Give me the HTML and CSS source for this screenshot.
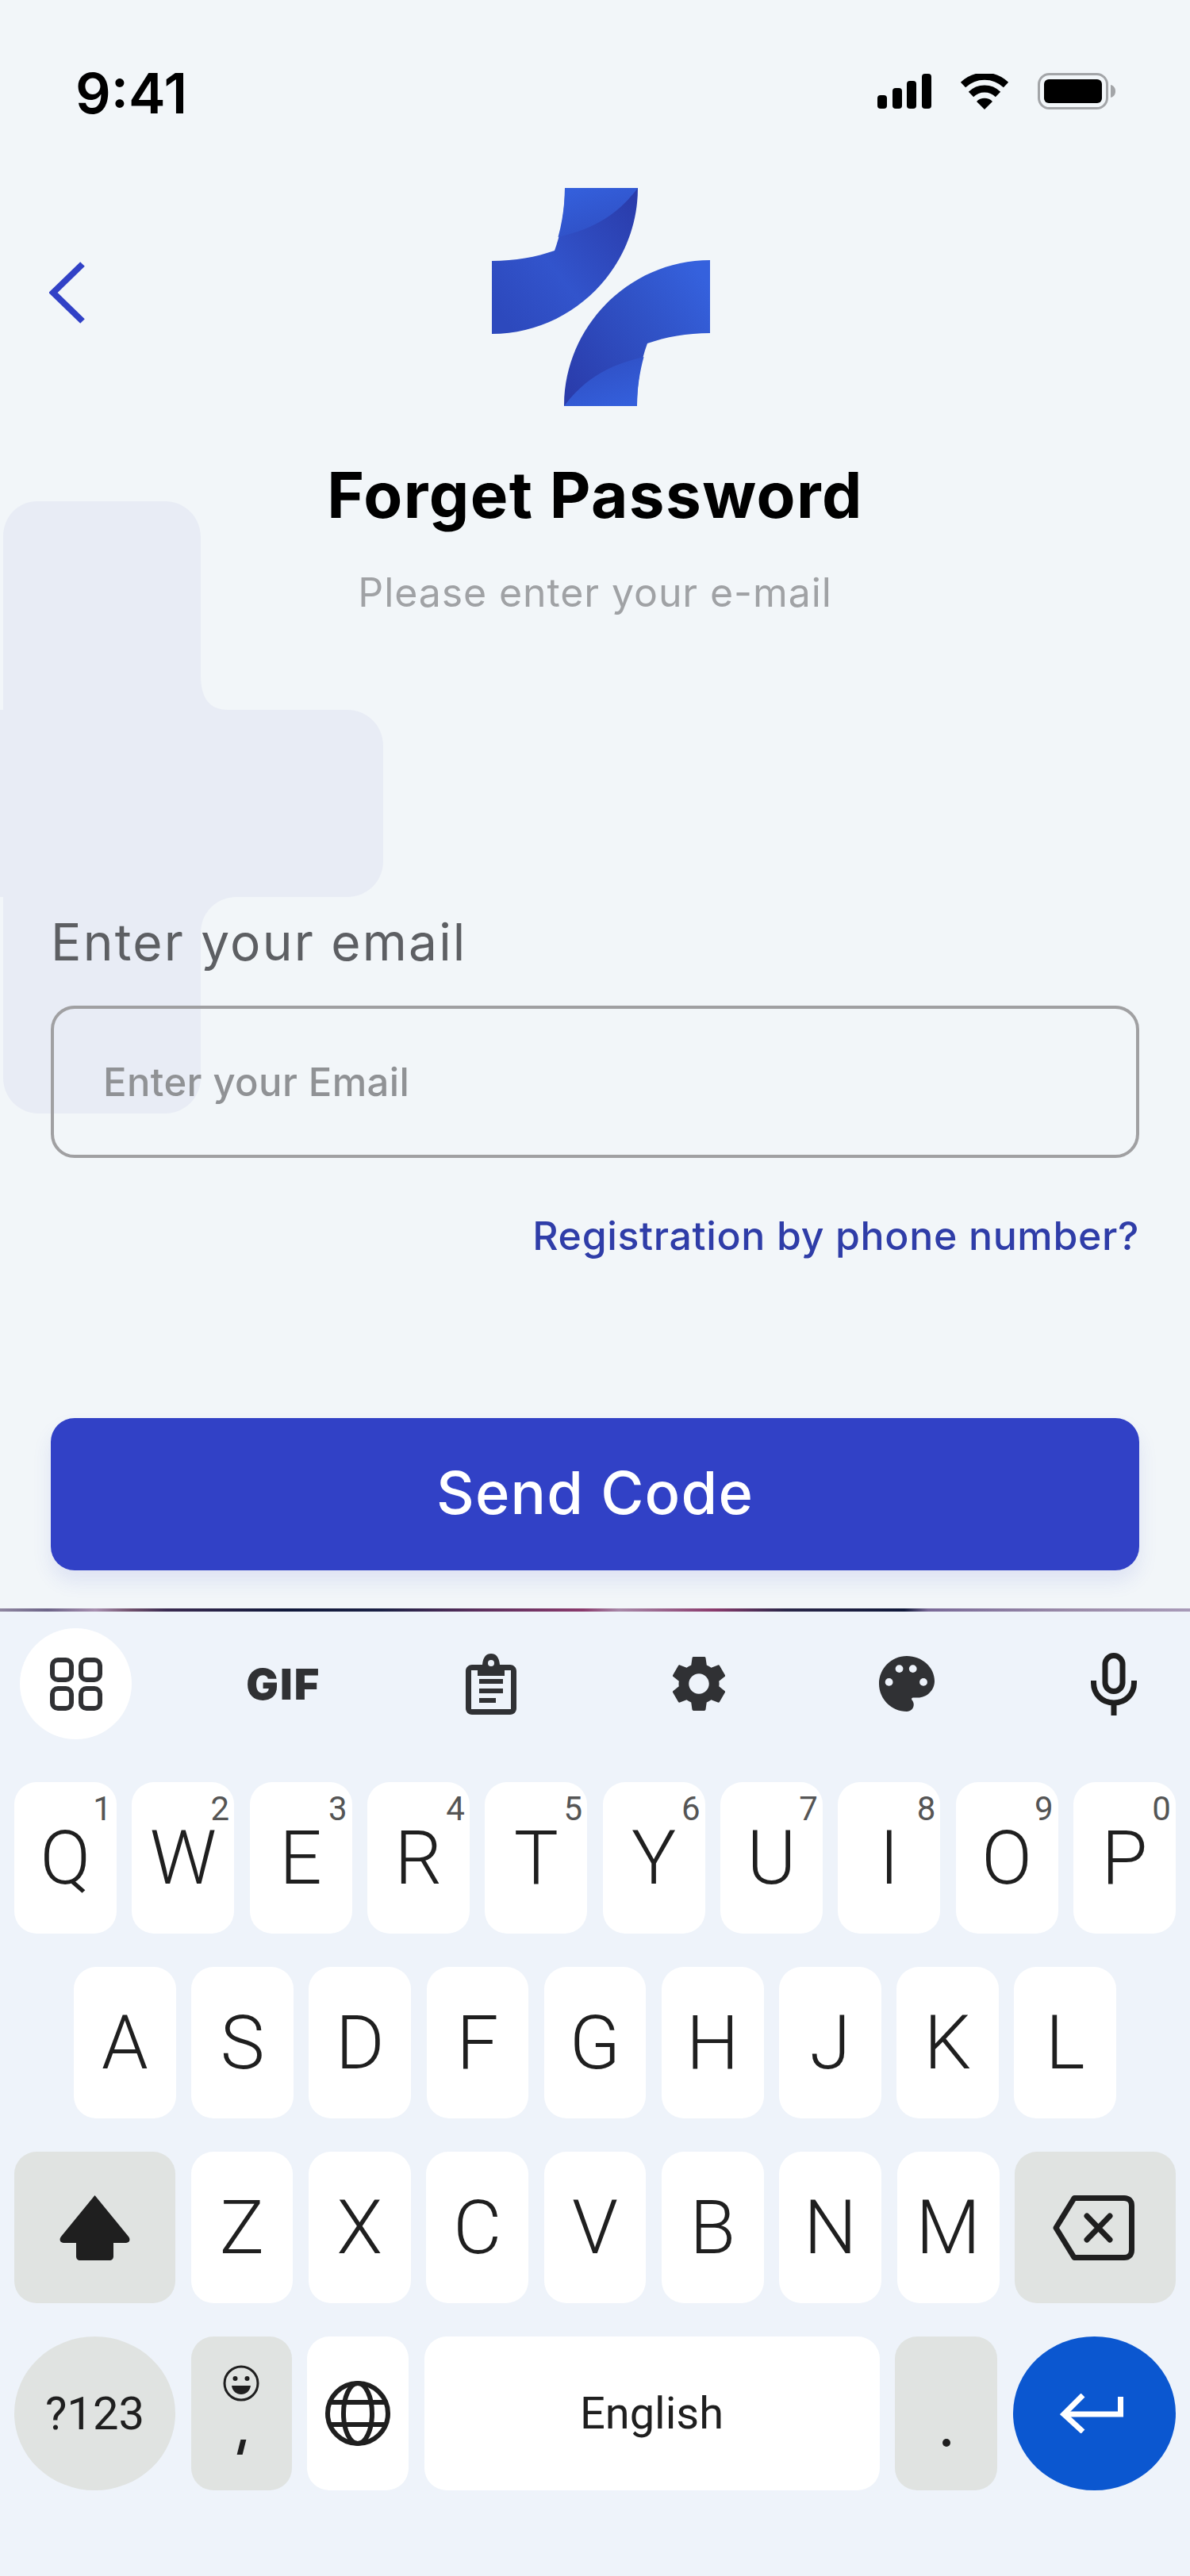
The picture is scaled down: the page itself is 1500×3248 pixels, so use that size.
FILE: index.html
```html
<!DOCTYPE html>
<html lang="en">

<head>
  <meta charset="UTF-8">
  <meta name="viewport" content="width=device-width, initial-scale=1.0">
  <title>Forget Password</title>

  <link rel="stylesheet" href="styles.css">
</head>

<body>
  <div class="phone">
    <svg class="bg-cross" viewBox="0 0 484 772" width="484" height="772">
      <path d="M4 45C4 20 22 0 47 0H208C233 0 253 20 253 45V220C253 245 262 263 287 263H438C463 263 483 283 483 308V454C483 479 463 499 438 499H298C273 499 253 519 253 544V727C253 752 233 772 208 772H49C24 772 4 752 4 727V499H0V263H4Z" />
    </svg>

    <div class="status-bar">
      <span class="time">9:41</span>
      <div class="status-icons">
        <svg width="68" height="44" viewBox="0 0 68 44">
          <rect x="0" y="27" width="12" height="17" rx="4" />
          <rect x="19" y="18" width="12" height="26" rx="4" />
          <rect x="37" y="9" width="12" height="35" rx="4" />
          <rect x="56" y="0" width="12" height="44" rx="4" />
        </svg>
        <svg width="62" height="45" viewBox="0 0 62 45">
          <path d="M4 14A39 39 0 0 1 58 14" fill="none" stroke="#000" stroke-width="9" />
          <path d="M14 26A24 24 0 0 1 48 26" fill="none" stroke="#000" stroke-width="9" />
          <path d="M31 45L21 35A14 14 0 0 1 41 35Z" />
        </svg>
        <svg width="98" height="46" viewBox="0 0 98 46">
          <rect x="1.5" y="1.5" width="86" height="43" rx="13" fill="none" stroke="#a3a5a8" stroke-width="3" />
          <rect x="8" y="8" width="73" height="30" rx="6" />
          <path d="M92 15C96 16 98 19 98 23S96 30 92 31Z" fill="#a3a5a8" />
        </svg>
      </div>
    </div>

    <div class="header">
      <button class="back-btn">
        <svg width="46" height="78" viewBox="0 0 46 78">
          <path d="M42 3L5 39L42 75" fill="none" stroke="#3141c6" stroke-width="8" />
        </svg>
      </button>
      <svg class="logo" width="275" height="275" viewBox="0 0 275 275">
        <defs>
          <linearGradient id="baseA" gradientUnits="userSpaceOnUse" x1="10" y1="160" x2="184" y2="20">
            <stop offset="0" stop-color="#2d49bd" />
            <stop offset="0.4" stop-color="#3254cc" />
            <stop offset="1" stop-color="#2a3cab" />
          </linearGradient>
          <linearGradient id="baseB" gradientUnits="userSpaceOnUse" x1="275" y1="125" x2="92" y2="255">
            <stop offset="0" stop-color="#3561dd" />
            <stop offset="0.4" stop-color="#3052c6" />
            <stop offset="1" stop-color="#2a3cab" />
          </linearGradient>
          <linearGradient id="topLight" gradientUnits="userSpaceOnUse" x1="110" y1="0" x2="130" y2="65">
            <stop offset="0" stop-color="#345fdb" />
            <stop offset="1" stop-color="#2f4fc4" />
          </linearGradient>
          <linearGradient id="bottomLight" gradientUnits="userSpaceOnUse" x1="165" y1="275" x2="145" y2="210">
            <stop offset="0" stop-color="#345fdb" />
            <stop offset="1" stop-color="#2f4fc4" />
          </linearGradient>
        </defs>
        <path d="M92 0H184C184 101 101 184 0 184V92C29 92 56 87 79 79C88 55 92 27 92 0Z" fill="url(#baseA)" />
        <path d="M92 0H184C155 38 125 52 83.500 62C89 42 92 20 92 0Z" fill="url(#topLight)" />
        <path d="M183 275H91C91 174 174 91 275 91V183C246 183 219 188 196 196C187 220 183 248 183 275Z" fill="url(#baseB)" />
        <path d="M183 275H91C120 237 150 223 191.500 213C186 233 183 255 183 275Z" fill="url(#bottomLight)" />
      </svg>
      <div></div>
    </div>

    <div class="intro">
      <h1>Forget Password</h1>
      <p>Please enter your e-mail</p>
    </div>

    <form class="form">
      <label for="email">Enter your email</label>
      <input id="email" type="text" placeholder="Enter your Email">
      <a class="phone-link" href="#">Registration by phone number?</a>
      <button class="send-btn" type="button">Send Code</button>
    </form>

    <div class="keyboard">
      <div class="keyboard-line"></div>
      <div class="toolbar">
        <div class="tool tool-active">
          <svg width="66" height="67" viewBox="0 0 66 67" fill="none" stroke="#303134" stroke-width="6">
            <rect x="3" y="3" width="24" height="25" rx="7" />
            <rect x="39" y="3" width="24" height="25" rx="7" />
            <rect x="3" y="39" width="24" height="25" rx="7" />
            <rect x="39" y="39" width="24" height="25" rx="7" />
          </svg>
        </div>
        <div class="tool"><span class="gif">GIF</span></div>
        <div class="tool">
          <svg width="64" height="77" viewBox="0 0 64 77">
            <path d="M8 14H21C22 4 26 0 32 0S42 4 43 14H56C60 14 64 17 64 22V69C64 74 60 77 56 77H8C4 77 0 74 0 69V22C0 17 4 14 8 14ZM7 21V70H57V21H49V28H15V21Z" fill="#303134" fill-rule="evenodd" />
            <circle cx="32" cy="12" r="4" fill="#edf2fa" />
            <rect x="17" y="32" width="30" height="6" fill="#303134" />
            <rect x="17" y="44" width="30" height="6" fill="#303134" />
            <rect x="17" y="56" width="21" height="6" fill="#303134" />
          </svg>
        </div>
        <div class="tool">
          <svg width="68" height="70" viewBox="2.4 2.2 19.2 19.6">
            <path d="M19.14 12.94c.04-.3.06-.61.06-.94 0-.32-.02-.64-.07-.94l2.03-1.58c.18-.14.23-.41.12-.61l-1.92-3.32c-.12-.22-.37-.29-.59-.22l-2.39.96c-.5-.38-1.03-.7-1.62-.94L14.4 2.81c-.04-.24-.24-.41-.48-.41h-3.84c-.24 0-.43.17-.47.41L9.25 5.35c-.59.24-1.13.57-1.62.94l-2.39-.96c-.22-.08-.47 0-.59.22L2.74 8.87c-.12.21-.08.47.12.61l2.03 1.58c-.05.3-.09.63-.09.94s.02.64.07.94l-2.03 1.58c-.18.14-.23.41-.12.61l1.92 3.32c.12.22.37.29.59.22l2.39-.96c.5.38 1.03.7 1.62.94l.36 2.54c.05.24.24.41.48.41h3.84c.24 0 .44-.17.47-.41l.36-2.54c.59-.24 1.13-.56 1.62-.94l2.39.96c.22.08.47 0 .59-.22l1.92-3.32c.12-.22.07-.47-.12-.61l-2.01-1.58zM12 15.6c-1.98 0-3.6-1.62-3.6-3.6s1.62-3.6 3.6-3.6 3.6 1.62 3.6 3.6-1.62 3.6-3.6 3.6z" fill="#303134" />
          </svg>
        </div>
        <div class="tool">
          <svg width="70" height="70" viewBox="2 2 20 20">
            <path d="M12 2C6.49 2 2 6.49 2 12s4.49 10 10 10c1.38 0 2.5-1.12 2.5-2.5 0-.61-.23-1.2-.64-1.67-.08-.1-.13-.21-.13-.33 0-.28.22-.5.5-.5H16c3.31 0 6-2.69 6-6 0-4.96-4.49-9-10-9z" fill="#303134" />
            <circle cx="5.6" cy="11.4" r="1.4" fill="#edf2fa" />
            <circle cx="9.3" cy="6.6" r="1.4" fill="#edf2fa" />
            <circle cx="14.2" cy="6.6" r="1.4" fill="#edf2fa" />
            <circle cx="18" cy="11.4" r="1.4" fill="#edf2fa" />
          </svg>
        </div>
        <div class="tool">
          <svg width="58" height="79" viewBox="0 0 58 79" fill="none" stroke="#1f1f1f" stroke-width="7">
            <rect x="18" y="3.5" width="22" height="45" rx="11" />
            <path d="M3.5 35V38C3.5 52 14 63 29 63S54.500 52 54.500 38V35" />
            <path d="M29 63V79" />
          </svg>
        </div>
      </div>

      <div class="key-row row-one">
        <div class="key">Q<sup>1</sup></div>
        <div class="key">W<sup>2</sup></div>
        <div class="key">E<sup>3</sup></div>
        <div class="key">R<sup>4</sup></div>
        <div class="key">T<sup>5</sup></div>
        <div class="key">Y<sup>6</sup></div>
        <div class="key">U<sup>7</sup></div>
        <div class="key">I<sup>8</sup></div>
        <div class="key">O<sup>9</sup></div>
        <div class="key">P<sup>0</sup></div>
      </div>
      <div class="key-row row-two">
        <div class="key">A</div>
        <div class="key">S</div>
        <div class="key">D</div>
        <div class="key">F</div>
        <div class="key">G</div>
        <div class="key">H</div>
        <div class="key">J</div>
        <div class="key">K</div>
        <div class="key">L</div>
      </div>
      <div class="key-row row-three">
        <div class="key key-grey key-wide">
          <svg width="89" height="82" viewBox="0 0 89 82">
            <path d="M44.500 0L87 52C90 56 88 60 84 60H68V77C68 80 66 82 63 82H26C23 82 21 80 21 77V60H5C1 60 -1 56 2 52Z" fill="#1f1f1f" />
          </svg>
        </div>
        <div class="key">Z</div>
        <div class="key">X</div>
        <div class="key">C</div>
        <div class="key">V</div>
        <div class="key">B</div>
        <div class="key">N</div>
        <div class="key">M</div>
        <div class="key key-grey key-wide">
          <svg class="icon-backspace" width="103" height="82" viewBox="0 0 103 82" fill="none" stroke="#1f1f1f" stroke-width="7">
            <path d="M27 3.500H90C96 3.500 99.500 7 99.500 13V69C99.500 75 96 78.500 90 78.500H27L4 41Z" stroke-linejoin="round" />
            <path d="M43 26L72 56M72 26L43 56" stroke-linecap="round" />
          </svg>
        </div>
      </div>
      <div class="key-row row-four">
        <div class="key key-grey key-wide key-round key-small">?123</div>
        <div class="key key-grey key-emoji">
          <svg width="46" height="46" viewBox="0 0 46 46">
            <circle cx="23" cy="23" r="21" fill="none" stroke="#1f1f1f" stroke-width="3" />
            <circle cx="15.500" cy="17" r="3" fill="#1f1f1f" />
            <circle cx="30.500" cy="17" r="3" fill="#1f1f1f" />
            <path d="M11 26H35C34 33 29 37 23 37S12 33 11 26Z" fill="#1f1f1f" />
          </svg>
          <span class="comma"></span>
        </div>
        <div class="key key-globe">
          <svg width="84" height="84" viewBox="0 0 84 84" fill="none" stroke="#1f1f1f" stroke-width="6">
            <circle cx="42" cy="42" r="38" />
            <ellipse cx="42" cy="42" rx="18" ry="38" />
            <path d="M7 28H77M7 56H77" />
          </svg>
        </div>
        <div class="key key-space">English</div>
        <div class="key key-grey key-period"><span class="dot"></span></div>
        <div class="key key-round key-enter">
          <svg class="icon-enter" width="80" height="50" viewBox="0 0 80 50" fill="none" stroke="#fff" stroke-width="7">
            <path d="M76.500 4V26H6" />
            <path d="M29 2L5 26L29 48" />
          </svg>
        </div>
      </div>
    </div>
  </div>
</body>

</html>
```

FILE: styles.css
```css
body {
  margin: 0;
  font-family: Inter, sans-serif;
  background-color: #f2f6f9;
}

.phone {
  position: relative;
  width: 1500px;
  height: 3248px;
  display: flex;
  flex-direction: column;
  overflow: hidden;
  background-color: #f2f6f9;
}

.bg-cross {
  position: absolute;
  left: 0;
  top: 632px;
  fill: #e8ecf5;
}

.status-bar {
  position: relative;
  height: 237px;
  padding: 80px 94px 0 95px;
  box-sizing: border-box;
  display: flex;
  justify-content: space-between;
  align-items: flex-start;
}

.time {
  font-size: 70px;
  font-weight: 600;
  line-height: 76px;
  color: #000;
}

.status-icons {
  display: flex;
  align-items: center;
  gap: 36px;
  padding-top: 12px;
}

.header {
  position: relative;
  display: grid;
  grid-template-columns: 620px 275px 1fr;
  align-items: center;
}

.back-btn {
  border: none;
  background: none;
  padding: 0 0 12px 62px;
  justify-self: start;
  display: flex;
}

.intro {
  position: relative;
  text-align: center;
  margin-top: 67px;
}

h1 {
  margin: 0;
  font-size: 80px;
  font-weight: 700;
  line-height: 90px;
  letter-spacing: 1.4px;
  color: #000;
}

.intro p {
  margin: 48px 0 0;
  font-size: 50px;
  line-height: 60px;
  letter-spacing: 0.9px;
  color: #a0a2a5;
}

.form {
  position: relative;
  display: flex;
  flex-direction: column;
  padding: 0 64px;
  margin-top: 376px;
}

label {
  font-size: 64px;
  line-height: 70px;
  letter-spacing: 2.2px;
  color: #5d5f63;
}

input {
  height: 192px;
  margin-top: 45px;
  padding: 0 0 0 62px;
  border: 4px solid #a0a0a2;
  border-radius: 30px;
  box-sizing: border-box;
  background: transparent;
  font-family: Inter, sans-serif;
  font-size: 49px;
  font-weight: 500;
  letter-spacing: 0.4px;
  outline: none;
}

input::placeholder {
  color: #909295;
  opacity: 1;
}

.phone-link {
  align-self: flex-end;
  margin-top: 68px;
  font-size: 50px;
  font-weight: 500;
  line-height: 60px;
  letter-spacing: 0.65px;
  color: #2f3da8;
  text-decoration: none;
}

.send-btn {
  height: 192px;
  margin-top: 200px;
  padding: 0 0 4px;
  border: none;
  border-radius: 30px;
  background: #3141c6;
  box-shadow: 0 14px 24px rgba(49, 65, 198, 0.1);
  color: white;
  font-family: Inter, sans-serif;
  font-size: 74px;
  font-weight: 500;
  letter-spacing: 1.2px;
}

.keyboard {
  position: absolute;
  left: 0;
  right: 0;
  bottom: 0;
  height: 1220px;
  background: #eef3fa;
  font-family: Roboto, sans-serif;
  color: #1f1f1f;
}

.keyboard-line {
  height: 4px;
  background: linear-gradient(90deg, #8f86a0 0%, #6d6488 4%, #a890b0 8%, #70506c 11%, #3a2a50 14%, #10183a 24%, #1a2044 32%, #5a2e5c 40%, #8a3a6c 49%, #a888a8 52%, #8a3a6c 60%, #2a2648 66%, #10183a 76%, #7a6a98 78%, #9a8aa8 90%, #a89ab8 100%);
}

.toolbar {
  height: 215px;
  padding: 21px 25px 0;
  box-sizing: border-box;
  display: flex;
  justify-content: space-between;
  align-items: flex-start;
}

.tool {
  width: 141px;
  height: 140px;
  display: flex;
  justify-content: center;
  align-items: center;
}

.tool-active {
  background: white;
  border-radius: 50%;
}

.gif {
  font-family: Inter, sans-serif;
  font-size: 54px;
  font-weight: 900;
  letter-spacing: 2px;
  color: #303134;
}

.key-row {
  display: flex;
  gap: 19.5px;
  height: 191px;
  margin-bottom: 42px;
  padding: 0 18px;
}

.row-two {
  padding: 0 93px;
}

.row-four {
  height: 194px;
}

.key {
  position: relative;
  flex: 1;
  display: flex;
  justify-content: center;
  align-items: center;
  background: white;
  border-radius: 28px;
  font-size: 94px;
  font-weight: 300;
  line-height: 76px;
}

.key sup {
  position: absolute;
  top: 16px;
  right: 6px;
  font-size: 42px;
  font-weight: 400;
  line-height: 36px;
  color: #555;
}

.key-grey {
  background: #e0e3e1;
}

.key-wide {
  flex: 0 0 203px;
}

.key-round {
  border-radius: 50%;
}

.key-small {
  font-size: 58px;
  font-weight: 400;
}

.key-emoji {
  flex-direction: column;
  justify-content: flex-start;
  flex: 0 0 127px;
  padding-top: 36px;
  box-sizing: border-box;
}

.comma {
  width: 7px;
  height: 19px;
  margin-top: 48px;
  background: #1f1f1f;
  transform: skewX(-14deg);
}

.key-globe {
  flex: 0 0 128px;
}

.key-space {
  flex: 0 0 574px;
  font-size: 56px;
  font-weight: 400;
}

.key-period {
  flex: 0 0 129px;
  align-items: flex-start;
}

.dot {
  width: 10px;
  height: 10px;
  margin-top: 129px;
  background: #1f1f1f;
  border-radius: 50%;
}

.key-enter {
  background: #0b57d0;
}

.icon-backspace {
  margin-right: 4px;
}

.icon-enter {
  margin-right: 6px;
}
```
